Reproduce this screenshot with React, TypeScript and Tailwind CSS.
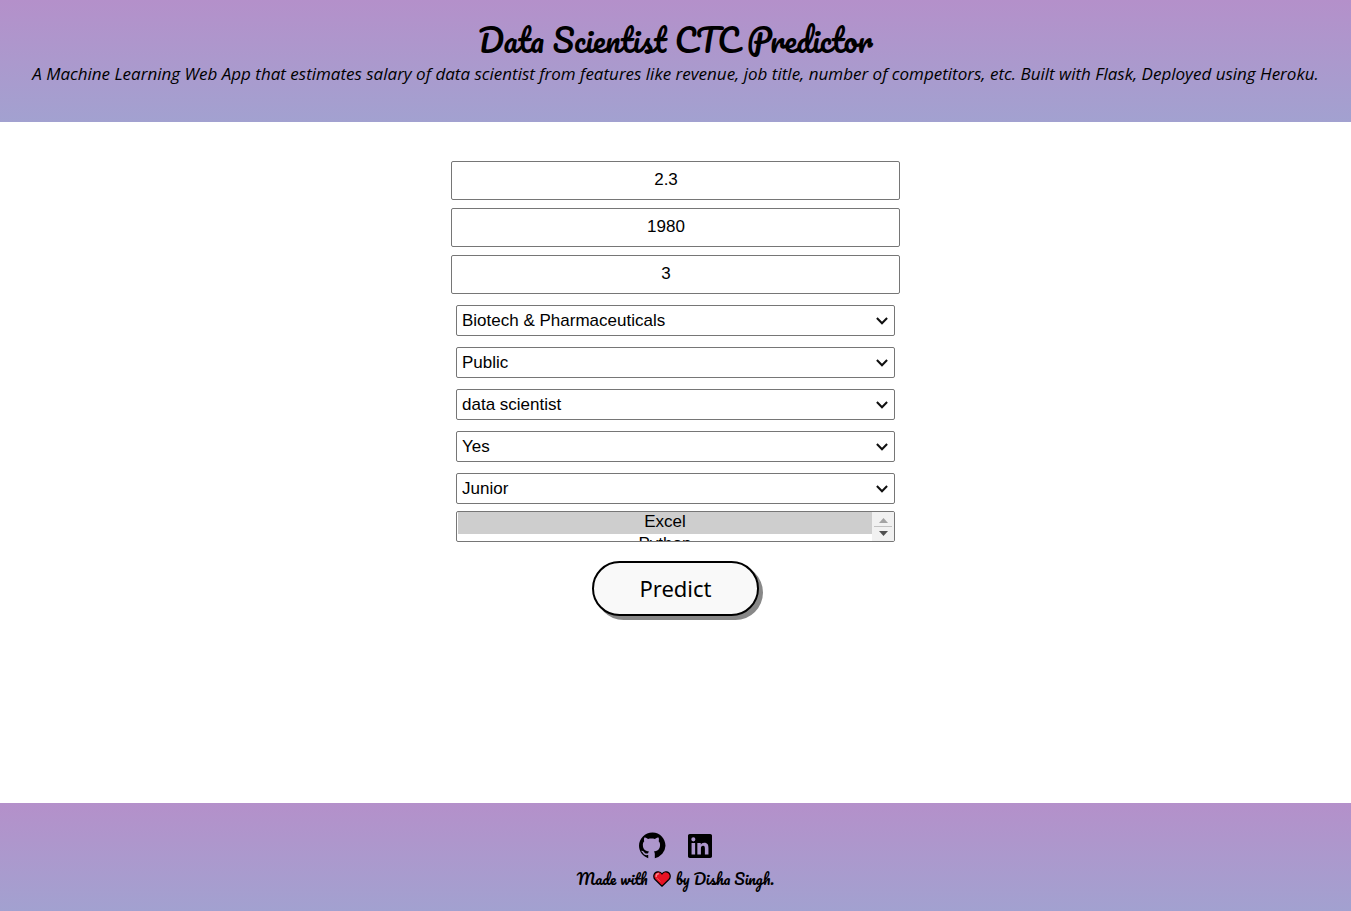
import { useRef, useState } from 'react';

const numberFields = [
  { id: 'rating', label: 'Company rating', value: '2.3' },
  { id: 'founded', label: 'Year founded', value: '1980' },
  { id: 'competitors', label: 'Number of competitors', value: '3' },
];

const choiceFields = [
  { id: 'sector', label: 'Sector', options: ['Biotech & Pharmaceuticals', 'Health Care', 'Information Technology', 'Finance'] },
  { id: 'ownership', label: 'Ownership', options: ['Public', 'Private', 'Government'] },
  { id: 'title', label: 'Job title', options: ['data scientist', 'data engineer', 'analyst', 'manager'] },
  { id: 'headquarters', label: 'Job in headquarters', options: ['Yes', 'No'] },
  { id: 'seniority', label: 'Seniority', options: ['Junior', 'Senior'] },
];

const skills = ['Excel', 'Python', 'SQL', 'Tableau'];

function NumberField({ id, label, value }: { id: string; label: string; value: string }) {
  return (
    <input
      id={id}
      name={id}
      aria-label={label}
      type="number"
      step="any"
      defaultValue={value}
      className="block h-[39px] w-full rounded-[2px] border border-[#767676] bg-white pr-1 pb-0.5 text-center text-[17px] text-black"
    />
  );
}

function ChoiceField({ id, label, options }: { id: string; label: string; options: string[] }) {
  return (
    <div className="grid items-center">
      <select
        id={id}
        name={id}
        aria-label={label}
        className="col-start-1 row-start-1 h-[31px] w-full appearance-none rounded-[2px] border border-[#767676] bg-white pr-6 pl-[5px] text-[17px] text-black"
      >
        {options.map((option) => (
          <option key={option}>{option}</option>
        ))}
      </select>
      <svg
        className="pointer-events-none col-start-1 row-start-1 mr-[7px] h-3 w-3 justify-self-end"
        viewBox="0 0 12 12"
        fill="none"
        stroke="#101010"
        strokeWidth="2"
        aria-hidden="true"
      >
        <path d="M.9 3 6 8.3 11.1 3" />
      </svg>
    </div>
  );
}

function SkillList() {
  const list = useRef<HTMLSelectElement>(null);
  const [selected, setSelected] = useState(['Excel']);
  const scroll = (amount: number) => list.current?.scrollBy({ top: amount });
  return (
    <div className="mt-[7px] flex h-[31px] overflow-hidden rounded-[2px] border border-[#767676] bg-white">
      <select
        ref={list}
        id="skills"
        name="skills"
        aria-label="Skills"
        multiple
        value={selected}
        onChange={(e) => setSelected(Array.from(e.target.selectedOptions, (o) => o.value))}
        className="h-full min-w-0 flex-1 overflow-y-auto pl-px text-center text-[17px] text-black outline-none [scrollbar-width:none]"
      >
        {skills.map((skill) => (
          <option key={skill} className="h-[22px] p-0 text-center leading-5 checked:bg-[#cecece] checked:text-black">
            {skill}
          </option>
        ))}
      </select>
      <div className="flex w-[22px] flex-col bg-[#f1f1f1] px-0.5">
        <button type="button" aria-label="Scroll up" onClick={() => scroll(-22)} className="flex h-[15px] items-end justify-center border-b border-[#c1c1c1] pb-[3px]">
          <svg className="h-[5px] w-[9px]" viewBox="0 0 9 5" fill="#a3a3a3" aria-hidden="true"><path d="M0 5 4.5 0 9 5Z" /></svg>
        </button>
        <button type="button" aria-label="Scroll down" onClick={() => scroll(22)} className="flex flex-1 items-start justify-center pt-1">
          <svg className="h-[5px] w-[9px]" viewBox="0 0 9 5" fill="#505050" aria-hidden="true"><path d="M0 0 4.5 5 9 0Z" /></svg>
        </button>
      </div>
    </div>
  );
}

function Heart() {
  return (
    <svg className="h-4 w-[18px]" viewBox="0 0 18 16" role="img" aria-label="love">
      <path d="M9 15.2 2.1 8.5C-.2 6.1.6 1.2 4.7.8 6.7.6 8.2 1.6 9 3 9.8 1.6 11.3.6 13.3.8 17.4 1.2 18.2 6.1 15.9 8.5Z" fill="#e81224" stroke="#000" strokeWidth="1.2" strokeLinejoin="round" />
      <path d="M3.2 5.4C3.2 4 4 3 5.3 2.8" fill="none" stroke="#f7858c" strokeWidth="1.5" strokeLinecap="round" />
      <path d="m4 7.2 3 3" fill="none" stroke="#f4525d" strokeWidth="1" strokeLinecap="round" />
    </svg>
  );
}

export default function App() {
  return (
    <div className="flex min-h-screen flex-col bg-white font-['Liberation_Sans',Arial,sans-serif] text-black">
      <header className="bg-linear-to-b from-[#b490ca] to-[#a2a1d0] px-2 pt-[18px] pb-9 text-center">
        <h1 className="font-['Pacifico',cursive] text-[31px] leading-[44px] font-normal">
          Data Scientist CTC Predictor
        </h1>
        <p className="font-['Open_Sans',sans-serif] text-[17px] leading-6 italic">
          A Machine Learning Web App that estimates salary of data scientist from features like revenue, job title, number of competitors, etc. Built with Flask, Deployed using Heroku.
        </p>
      </header>

      <main className="flex-1 px-4 pt-[39px] pb-10">
        <form className="mx-auto flex max-w-[449px] flex-col" onSubmit={(e) => e.preventDefault()}>
          <div className="flex flex-col gap-2">
            {numberFields.map((field) => (
              <NumberField key={field.id} {...field} />
            ))}
          </div>
          <div className="px-[5px] pt-[11px]">
            <div className="flex flex-col gap-[11px]">
              {choiceFields.map((field) => (
                <ChoiceField key={field.id} {...field} />
              ))}
            </div>
            <SkillList />
          </div>
          <button
            type="submit"
            className="mt-[19px] self-center rounded-full border-2 border-black bg-[#f9f9f9] px-[45px] py-2.5 font-['Noto_Sans',sans-serif] text-[22px] leading-[31px] shadow-[4px_4px_0_#888888]"
          >
            Predict
          </button>
        </form>
      </main>

      <footer className="flex flex-col items-center bg-linear-to-b from-[#b490ca] to-[#a2a1d0] pt-[29px] pb-5">
        <div className="flex items-center gap-[22px]">
          <a href="#github" aria-label="GitHub">
            <svg className="h-[27px] w-[27px]" viewBox="0 0 16 16" aria-hidden="true">
              <path d="M8 .3C3.58.3 0 3.88 0 8.2c0 3.44 2.29 6.23 5.47 7.29V13.7c-2.01.37-2.73-.49-2.89-.94-.09-.23-.48-.94-.82-1.13-.28-.15-.68-.52-.01-.53.63-.01 1.08.58 1.23.82.72 1.21 1.87.87 2.43.66.07-.52.28-.87.51-1.07-1.78-.2-3.64-.89-3.64-3.95 0-.87.31-1.59.82-2.15-.08-.2-.36-1.02.08-2.12 0 0 .67-.21 2.2.82.64-.18 1.32-.27 2-.27s1.36.09 2 .27c1.53-1.04 2.2-.82 2.2-.82.44 1.1.16 1.92.08 2.12.51.56.82 1.27.82 2.15 0 3.07-1.87 3.75-3.65 3.95.29.25.54.73.54 1.48V15.49A7.8 7.8 0 0 0 15.7 8.2C15.7 3.88 12.42.3 8 .3Z" />
            </svg>
          </a>
          <a href="#linkedin" aria-label="LinkedIn">
            <svg className="h-6 w-6" viewBox="0 0 24 24" aria-hidden="true">
              <path d="M20.447 20.452h-3.554v-5.569c0-1.328-.027-3.037-1.852-3.037-1.853 0-2.136 1.445-2.136 2.939v5.667H9.351V9h3.414v1.561h.046c.477-.9 1.637-1.85 3.37-1.85 3.601 0 4.267 2.37 4.267 5.455v6.286zM5.337 7.433a2.062 2.062 0 0 1-2.063-2.065 2.064 2.064 0 1 1 2.063 2.065zm1.782 13.019H3.555V9h3.564v11.452zM22.225 0H1.771C.792 0 0 .774 0 1.729v20.542C0 23.227.792 24 1.771 24h20.451C23.2 24 24 23.227 24 22.271V1.729C24 .774 23.2 0 22.222 0h.003z" />
            </svg>
          </a>
        </div>
        <p className="mt-2 flex items-center gap-[5px] font-['Pacifico',cursive] text-[15px] leading-6">
          <span>Made with</span>
          <Heart />
          <span>by Disha Singh.</span>
        </p>
      </footer>
    </div>
  );
}
